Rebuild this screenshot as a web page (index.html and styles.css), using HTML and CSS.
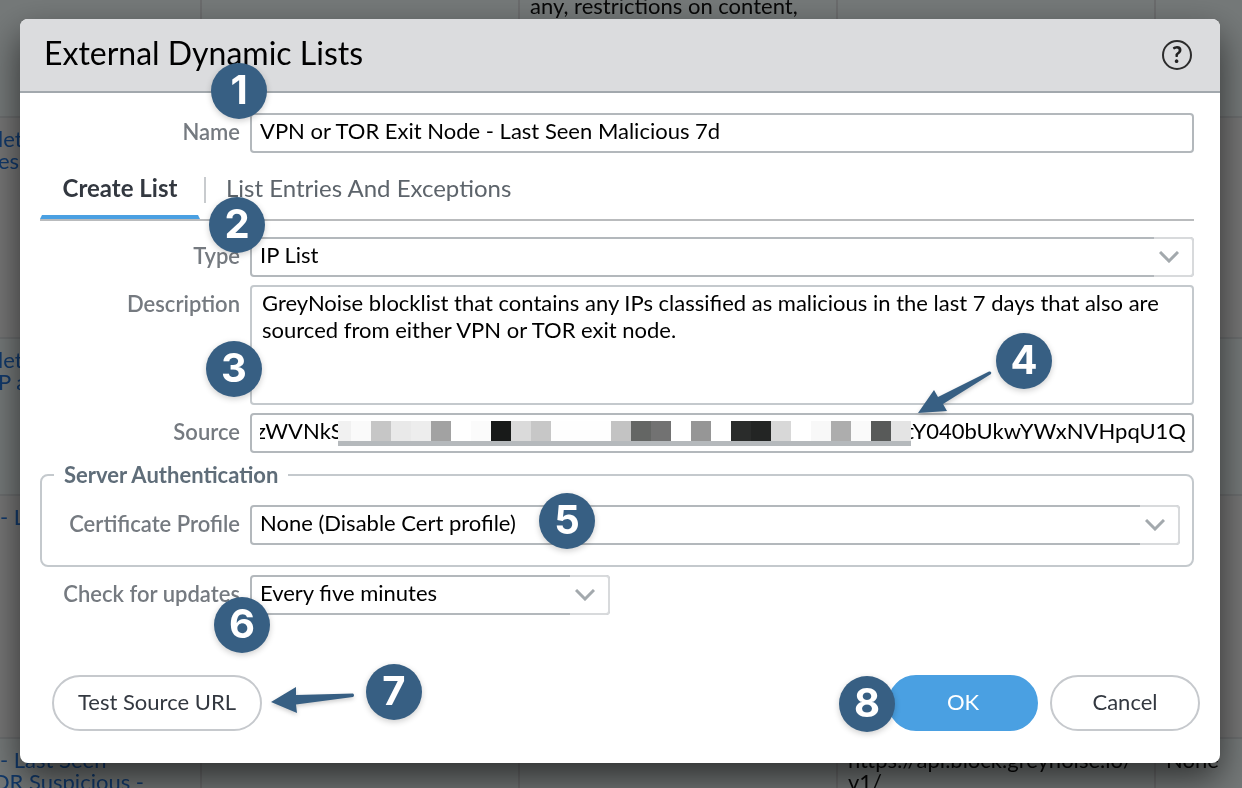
FILE: index.html
```html
<!DOCTYPE html>
<html lang="en">
<head>
  <meta charset="UTF-8">
  <title>External Dynamic Lists</title>
  <link rel="stylesheet" href="styles.css">
</head>
<body>

  <!-- List table behind the dialog -->
  <div class="backdrop">
    <table class="edl-table">
      <tr class="row-top">
        <td></td>
        <td></td>
        <td>any, restrictions on content,</td>
        <td></td>
        <td></td>
      </tr>
      <tr class="row-net">
        <td><a href="#"><span class="cut-net">let</span><br><span class="cut-net">es</span></a></td>
        <td></td>
        <td></td>
        <td></td>
        <td></td>
      </tr>
      <tr class="row-ip">
        <td><a href="#"><span class="cut-net">let</span><br><span class="cut-net">P a</span></a></td>
        <td></td>
        <td></td>
        <td></td>
        <td></td>
      </tr>
      <tr class="row-last">
        <td><a href="#">- L</a></td>
        <td></td>
        <td></td>
        <td></td>
        <td></td>
      </tr>
      <tr class="row-tor">
        <td><a href="#">- Last Seen<br><span class="cut-tor">OR Suspicious -</span></a></td>
        <td></td>
        <td></td>
        <td>https://api.block.greynoise.io/<br>v1/</td>
        <td>None</td>
      </tr>
    </table>
  </div>

  <div class="dialog" role="dialog" aria-labelledby="dialog-title">
    <div class="dialog-header">
      <h2 id="dialog-title">External Dynamic Lists</h2>
      <button class="help" type="button" aria-label="Help">?</button>
    </div>

    <form class="dialog-body">
      <div class="field">
        <label for="name">Name</label>
        <input type="text" id="name" value="VPN or TOR Exit Node - Last Seen Malicious 7d">
      </div>

      <div class="tabs">
        <button class="tab active" type="button">Create List</button>
        <span class="tab-divider"></span>
        <button class="tab" type="button">List Entries And Exceptions</button>
      </div>

      <div class="field">
        <label for="type">Type</label>
        <div class="select">
          <select id="type"><option>IP List</option></select>
          <span class="trigger"><svg width="20" height="12" viewBox="0 0 20 12"><path d="M1 1 L10 10 L19 1"/></svg></span>
        </div>
      </div>

      <div class="field">
        <label for="description">Description</label>
        <textarea id="description">GreyNoise blocklist that contains any IPs classified as malicious in the last 7 days that also are sourced from either VPN or TOR exit node.</textarea>
      </div>

      <div class="field">
        <label for="source">Source</label>
        <div class="source">
          <input type="text" id="source">
          <!-- Masked part of the URL -->
          <svg class="mask" viewBox="0 0 573 25" preserveAspectRatio="none" shape-rendering="crispEdges">
            <rect width="573" height="20" fill="#ffffff"/>
            <rect x="0" width="13" height="20" fill="#f1f1f1"/>
            <rect x="13" width="20" height="20" fill="#fafafa"/>
            <rect x="33" width="20" height="20" fill="#c6c6c6"/>
            <rect x="53" width="20" height="20" fill="#e9e9e9"/>
            <rect x="73" width="20" height="20" fill="#ededed"/>
            <rect x="93" width="20" height="20" fill="#a2a2a2"/>
            <rect x="133" width="20" height="20" fill="#fbfbfb"/>
            <rect x="153" width="20" height="20" fill="#181a19"/>
            <rect x="173" width="20" height="20" fill="#dadada"/>
            <rect x="193" width="20" height="20" fill="#c7c7c7"/>
            <rect x="213" width="60" height="20" fill="#fefefe"/>
            <rect x="273" width="20" height="20" fill="#c3c3c3"/>
            <rect x="293" width="20" height="20" fill="#646664"/>
            <rect x="313" width="20" height="20" fill="#727272"/>
            <rect x="353" width="20" height="20" fill="#969696"/>
            <rect x="393" width="20" height="20" fill="#2a2c2b"/>
            <rect x="413" width="20" height="20" fill="#232524"/>
            <rect x="433" width="20" height="20" fill="#d8d8d8"/>
            <rect x="473" width="20" height="20" fill="#f8f8f8"/>
            <rect x="493" width="20" height="20" fill="#adadad"/>
            <rect x="513" width="20" height="20" fill="#fafafa"/>
            <rect x="533" width="20" height="20" fill="#585a59"/>
            <rect x="553" width="20" height="20" fill="#e4e4e4"/>
            <rect y="20" width="573" height="5" fill="#b5b9bc"/>
          </svg>
        </div>
      </div>

      <fieldset>
        <legend>Server Authentication</legend>
        <div class="field">
          <label for="cert">Certificate Profile</label>
          <div class="select">
            <select id="cert"><option>None (Disable Cert profile)</option></select>
            <span class="trigger"><svg width="20" height="12" viewBox="0 0 20 12"><path d="M1 1 L10 10 L19 1"/></svg></span>
          </div>
        </div>
      </fieldset>

      <div class="field">
        <label for="updates">Check for updates</label>
        <div class="select short">
          <select id="updates"><option>Every five minutes</option></select>
          <span class="trigger"><svg width="20" height="12" viewBox="0 0 20 12"><path d="M1 1 L10 10 L19 1"/></svg></span>
        </div>
      </div>
    </form>

    <div class="dialog-footer">
      <button class="btn btn-test" type="button">Test Source URL</button>
      <button class="btn btn-ok" type="button">OK</button>
      <button class="btn" type="button">Cancel</button>
    </div>

    <!-- Step markers -->
    <span class="step step-1">1</span>
    <span class="step step-2">2</span>
    <span class="step step-3">3</span>
    <span class="step step-4">4</span>
    <span class="step step-5">5</span>
    <span class="step step-6">6</span>
    <span class="step step-7">7</span>
    <span class="step step-8">8</span>
    <svg class="arrow arrow-source" width="80" height="50" viewBox="0 0 80 50">
      <path d="M3 43 L19 20 L23 27 L74 1.500 Q77 1 76 4 L28 34 L32 41 Z"/>
    </svg>
    <svg class="arrow arrow-test" width="90" height="32" viewBox="0 0 90 32">
      <path d="M2 17 L27 2 L27 10 L84 8.500 Q86 10 84 12 L27 19.500 L28 28 Z"/>
    </svg>
  </div>

  <script>
    // Only the two ends of the URL are readable, the middle is blanked out
    const source = document.getElementById("source");
    source.value = "zWVNkS" + " ".repeat(100) + "t" + "Y040bUkwYWxNVHpqU1Q";
    // Keep the end of the URL in view
    source.scrollLeft = source.scrollWidth;
  </script>

</body>
</html>
```
FILE: styles.css
```css
* {
  box-sizing: border-box;
}

body {
  margin: 0;
  font-family: Lato, sans-serif;
  font-size: 22px;
  color: #000;
  background: #767676;
  overflow: hidden;
}

input,
select,
textarea,
button {
  font: inherit;
  color: inherit;
  margin: 0;
}

/* Table behind the dialog */
.backdrop {
  position: fixed;
  inset: 0;
  overflow: hidden;
}

.edl-table {
  width: 100%;
  table-layout: fixed;
  border-collapse: collapse;
  line-height: 22px;
  color: #080808;
}

.edl-table td {
  width: 318px;
  padding: 10px 0 0 10px;
  border-right: 2px solid #6b6c6d;
  border-bottom: 2px solid #6c6e6f;
  vertical-align: top;
  white-space: nowrap;
}

.edl-table td:first-child {
  width: 201px;
  padding-left: 0;
}

.edl-table td:last-child {
  width: auto;
  border-right: none;
}

.edl-table tr:nth-child(odd) {
  background: #757979;
}

.edl-table a {
  color: #123a6c;
  text-decoration: none;
}

/* Names run off the left edge */
.cut-net {
  margin-left: -2px;
}

.cut-tor {
  margin-left: -8px;
}

.row-top { height: 117px; }
.row-net { height: 221px; }
.row-ip { height: 157px; }
.row-last { height: 243px; }
.row-tor { height: 157px; }

.edl-table .row-top td {
  padding-top: 0;
  line-height: 12px;
}

/* Dialog */
.dialog {
  position: relative;
  margin: 19px 22px 25px 20px;
  background: #fff;
  border-radius: 8px;
  box-shadow: 0 16px 36px rgba(0, 0, 0, 0.6);
}

.dialog-header {
  display: flex;
  align-items: center;
  justify-content: space-between;
  height: 74px;
  padding: 0 28px 0 24px;
  background: #dbdcde;
  border-bottom: 2px solid #a2a8ad;
  border-radius: 8px 8px 0 0;
}

.dialog-header h2 {
  margin: 0;
  padding-bottom: 4px;
  font-size: 32px;
  line-height: 40px;
  font-weight: 400;
}

.help {
  width: 30px;
  height: 30px;
  padding: 0;
  border: 2px solid #2c2c2c;
  border-radius: 50%;
  background: none;
  font-size: 22px;
  line-height: 24px;
  font-weight: 900;
  color: #222;
}

.dialog-body {
  display: flex;
  flex-direction: column;
  gap: 8px;
  padding: 20px 26px 0 20px;
}

.field {
  display: flex;
  gap: 10px;
}

.field label {
  flex: none;
  width: 200px;
  padding-top: 5px;
  line-height: 28px;
  text-align: right;
  font-weight: 600;
  color: #757a80;
}

.field input,
.field select,
.field textarea {
  display: block;
  flex: 1;
  width: 100%;
  min-width: 0;
  height: 40px;
  padding: 0 8px 6px;
  border: 2px solid #b3b8bc;
  border-radius: 4px;
  background: #fff;
  outline: none;
}

.field textarea {
  height: 120px;
  padding: 2px 10px;
  line-height: 27px;
  border-color: #c4c9cd;
  resize: none;
}

/* Tabs */
.tabs {
  display: flex;
  align-items: center;
  height: 60px;
  margin-bottom: 8px;
  border-bottom: 2px solid #b9bbbd;
}

.tab {
  height: 58px;
  padding: 0 0 6px;
  border: none;
  background: none;
  font-size: 24px;
  color: #5d646b;
}

.tab.active {
  width: 160px;
  border-bottom: 4px solid #4aa0e2;
  border-left: 2px solid transparent;
  border-right: 2px solid transparent;
  padding: 0 0 2px;
  font-weight: 700;
  color: #333840;
}

.tab-divider {
  width: 2px;
  height: 26px;
  margin: 0 20px 0 4px;
  background: #c8cbce;
}

/* Drop-downs */
.select {
  position: relative;
  flex: 1;
}

.select.short {
  flex: none;
  width: 360px;
}

.select select {
  appearance: none;
}

.trigger {
  position: absolute;
  top: 0;
  right: 0;
  display: flex;
  align-items: center;
  justify-content: center;
  width: 40px;
  height: 40px;
  padding-right: 8px;
  border: 2px solid #d8dadc;
  border-left: none;
  border-radius: 0 4px 4px 0;
  background: #fff;
  pointer-events: none;
}

.trigger svg {
  fill: none;
  stroke: #a3a9ad;
  stroke-width: 3;
}

/* Source */
.source {
  position: relative;
  flex: 1;
}

.source input {
  padding-right: 6px;
  text-align: right;
}

.mask {
  position: absolute;
  top: 8px;
  left: 88px;
  width: calc(100% - 371px);
  height: 25px;
}

fieldset {
  min-width: 0;
  margin: 0;
  padding: 16px 12px 20px 0;
  border: 2px solid #c4c9cd;
  border-radius: 8px;
}

legend {
  margin-left: 12px;
  padding: 0 10px;
  line-height: 28px;
  font-weight: 700;
  color: #5f6d79;
}

fieldset .field label {
  width: 198px;
}

/* Footer */
.dialog-footer {
  display: flex;
  gap: 12px;
  padding: 60px 20px 32px 32px;
}

.btn {
  width: 150px;
  height: 56px;
  padding: 0 0 4px;
  border: 2px solid #c6c9cd;
  border-radius: 28px;
  background: #fff;
  color: #333840;
  cursor: pointer;
}

.btn-test {
  width: 210px;
  margin-right: auto;
}

.btn-ok {
  border-color: #4aa0e2;
  background: #4aa0e2;
  color: #fff;
}

/* Step markers */
.step {
  position: absolute;
  width: 56px;
  height: 56px;
  border-radius: 50%;
  background: #375f83;
  box-shadow: 0 2px 6px rgba(0, 0, 0, 0.2);
  color: #fff;
  font-family: Inter, sans-serif;
  font-size: 40px;
  line-height: 54px;
  font-weight: 700;
  text-align: center;
}

.step-1 { left: 191px; top: 44px; }
.step-2 { left: 189px; top: 178px; }
.step-3 { left: 186px; top: 322px; }
.step-4 { right: 168px; top: 314px; }
.step-5 { left: 519px; top: 474px; }
.step-6 { left: 194px; top: 578px; }
.step-7 { left: 346px; top: 645px; }
.step-8 { right: 325px; top: 657px; }

.arrow {
  position: absolute;
  fill: #375f83;
  filter: drop-shadow(0 2px 2px rgba(0, 0, 0, 0.2));
}

.arrow-source { right: 225px; top: 351px; }
.arrow-test { left: 249px; top: 666px; }
```
